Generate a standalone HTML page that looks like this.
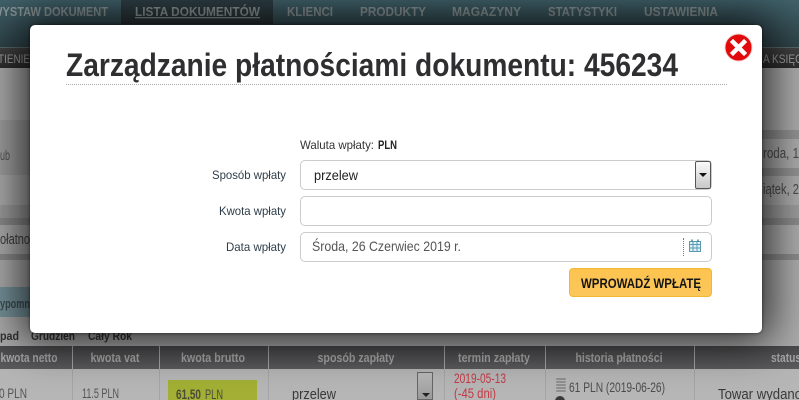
<!DOCTYPE html>
<html><head><meta charset="utf-8"><style>
html,body{margin:0;padding:0;background:#a8a8a8}
#p{position:relative;width:799px;height:400px;overflow:hidden;background:#adadad;font-family:"Liberation Sans",sans-serif}
.a{position:absolute}
svg{position:absolute;left:0;top:0}
</style></head><body><div id="p">
<div class="a" style="left:0;top:0;width:799px;height:47px;background:linear-gradient(#41626b,#2f4449)"></div>
<div class="a" style="left:121px;top:0;width:152px;height:24px;background:linear-gradient(#2e4046,#2b3539)"></div>
<div class="a" style="left:0;top:47px;width:799px;height:1px;background:#5c6a6c"></div>
<div class="a" style="left:0;top:48px;width:799px;height:20px;background:linear-gradient(#434343,#2d2d2d)"></div>
<div class="a" style="left:0;top:68px;width:799px;height:278px;background:#acacac"></div>
<div class="a" style="left:0;top:120px;width:40px;height:55px;background:#9f9f9f"></div>
<div class="a" style="left:740px;top:130px;width:59px;height:9px;background:#939393"></div>
<div class="a" style="left:740px;top:168px;width:59px;height:8px;background:#939393"></div>
<div class="a" style="left:0;top:205px;width:799px;height:13px;background:#9d9d9d"></div>
<div class="a" style="left:0;top:218px;width:799px;height:7px;background:#8c8c8c"></div>
<div class="a" style="left:0;top:254px;width:799px;height:6px;background:#8c8c8c"></div>
<div class="a" style="left:0;top:287px;width:40px;height:30px;background:#76939b"></div>
<div class="a" style="left:0;top:346px;width:799px;height:54px;background:#b6b6b6"></div>
<div class="a" style="left:0;top:346px;width:799px;height:23px;background:linear-gradient(#4a4a4c,#5b5b5d)"></div>
<div class="a" style="left:72px;top:346px;width:1px;height:54px;background:#a5a5a5"></div>
<div class="a" style="left:159px;top:346px;width:1px;height:54px;background:#a5a5a5"></div>
<div class="a" style="left:268px;top:346px;width:1px;height:54px;background:#a5a5a5"></div>
<div class="a" style="left:444px;top:346px;width:1px;height:54px;background:#a5a5a5"></div>
<div class="a" style="left:545px;top:346px;width:1px;height:54px;background:#a5a5a5"></div>
<div class="a" style="left:694px;top:346px;width:1px;height:54px;background:#a5a5a5"></div>
<div class="a" style="left:168px;top:380px;width:89px;height:20px;background:#a3b035"></div>
<div class="a" style="left:417px;top:372px;width:16px;height:28px;box-sizing:border-box;border:1px solid #666;background:linear-gradient(#bbb,#999)"></div>
<div class="a" style="left:426px;top:393px;width:0;height:0;margin-left:-4px;border:4px solid transparent;border-top:4px solid #222"></div>
<div class="a" style="left:556px;top:378px;width:10px;height:2px;border-radius:2px;background:#8f8f8f;box-shadow:0 3px #8f8f8f,0 6px #8f8f8f,0 9px #8f8f8f,0 12px #8f8f8f"></div>
<div class="a" style="left:555px;top:396px;width:10px;height:10px;border-radius:50%;background:#3a3a3a"></div>

<svg width="799" height="400" font-family="Liberation Sans, sans-serif">
<g font-weight="bold" font-size="13" fill="#8d9799">
<text x="-8" y="16" textLength="116" lengthAdjust="spacingAndGlyphs" fill="#8d9799">WYSTAW DOKUMENT</text>
<text x="135" y="16" textLength="125" lengthAdjust="spacingAndGlyphs" fill="#8d9799" text-decoration="underline">LISTA DOKUMENTÓW</text>
<text x="287" y="16" textLength="46" lengthAdjust="spacingAndGlyphs">KLIENCI</text>
<text x="360" y="16" textLength="66" lengthAdjust="spacingAndGlyphs">PRODUKTY</text>
<text x="452" y="16" textLength="69" lengthAdjust="spacingAndGlyphs">MAGAZYNY</text>
<text x="548" y="16" textLength="69" lengthAdjust="spacingAndGlyphs">STATYSTYKI</text>
<text x="644" y="16" textLength="74" lengthAdjust="spacingAndGlyphs">USTAWIENIA</text>
</g>
<text x="-2" y="63" font-size="12" fill="#a5a5a5" textLength="32" lengthAdjust="spacingAndGlyphs">TIENIE</text>
<text x="763" y="63" font-size="12" fill="#a5a5a5" textLength="40" lengthAdjust="spacingAndGlyphs">A KSIĘG</text>
<text x="0" y="160" font-size="14" fill="#555" textLength="10" lengthAdjust="spacingAndGlyphs">ub</text>
<text x="0" y="244" font-size="15" fill="#3c3c3c" textLength="30" lengthAdjust="spacingAndGlyphs">ołatno</text>
<text x="0" y="308" font-size="13" font-weight="bold" fill="#3d4c50" textLength="30" lengthAdjust="spacingAndGlyphs">ypomn</text>
<text x="763" y="158" font-size="15" fill="#4c4c4c" textLength="36" lengthAdjust="spacingAndGlyphs">roda, 1</text>
<text x="763" y="194" font-size="15" fill="#4c4c4c" textLength="36" lengthAdjust="spacingAndGlyphs">iątek, 2</text>
<g font-size="12" font-weight="bold" fill="#333">
<text x="0" y="340" textLength="19" lengthAdjust="spacingAndGlyphs">pad</text>
<text x="31" y="340" textLength="44" lengthAdjust="spacingAndGlyphs">Grudzień</text>
<text x="88" y="340" textLength="44" lengthAdjust="spacingAndGlyphs">Cały Rok</text>
</g>
<g font-size="13" font-weight="bold" fill="#a8a8a8" text-anchor="middle">
<text x="29" y="362" textLength="57" lengthAdjust="spacingAndGlyphs">kwota netto</text>
<text x="115" y="362" textLength="49" lengthAdjust="spacingAndGlyphs">kwota vat</text>
<text x="213" y="362" textLength="64" lengthAdjust="spacingAndGlyphs">kwota brutto</text>
<text x="356" y="362" textLength="77" lengthAdjust="spacingAndGlyphs">sposób zapłaty</text>
<text x="494" y="362" textLength="72" lengthAdjust="spacingAndGlyphs">termin zapłaty</text>
<text x="619" y="362" textLength="87" lengthAdjust="spacingAndGlyphs">historia płatności</text>
<text x="786" y="362" textLength="30" lengthAdjust="spacingAndGlyphs">status</text>
</g>
<g font-size="13.5" fill="#555">
<text x="-1" y="398" textLength="28" lengthAdjust="spacingAndGlyphs">0 PLN</text>
<text x="82" y="398" textLength="37" lengthAdjust="spacingAndGlyphs">11.5 PLN</text>
<text x="176" y="399" font-weight="bold" fill="#4c4c3a" textLength="25" lengthAdjust="spacingAndGlyphs">61,50</text>
<text x="205" y="399" fill="#4c4c3a" textLength="18" lengthAdjust="spacingAndGlyphs">PLN</text>
<text x="292" y="399" font-size="15" fill="#3a3a3a" textLength="44" lengthAdjust="spacingAndGlyphs">przelew</text>
<text x="454" y="383" fill="#c33a45" textLength="52" lengthAdjust="spacingAndGlyphs">2019-05-13</text>
<text x="454" y="398" fill="#c33a45" textLength="42" lengthAdjust="spacingAndGlyphs">(-45 dni)</text>
<text x="569" y="392" fill="#4c4c4c" textLength="96" lengthAdjust="spacingAndGlyphs">61 PLN (2019-06-26)</text>
<text x="718" y="399" font-size="15" fill="#3a3a3a" textLength="84" lengthAdjust="spacingAndGlyphs">Towar wydano</text>
</g>
</svg>

<div class="a" style="left:30px;top:25px;width:732px;height:308px;background:#fff;border-radius:5px;box-shadow:0 0 42px 10px rgba(0,0,0,.72),0 0 3px rgba(0,0,0,.6)"></div>
<div class="a" style="left:66px;top:84px;width:661px;border-top:1px dotted #aaa"></div>
<div class="a" style="left:300px;top:160px;width:412px;height:30px;box-sizing:border-box;border:1px solid #ccc;border-radius:5px;background:#fff"></div>
<div class="a" style="left:695px;top:161px;width:16px;height:28px;box-sizing:border-box;border:1px solid #555;border-radius:2px;background:linear-gradient(#fafafa,#c8c8c8)"></div>
<div class="a" style="left:699px;top:173px;width:0;height:0;border:4px solid transparent;border-top:4px solid #111"></div>
<div class="a" style="left:300px;top:196px;width:412px;height:30px;box-sizing:border-box;border:1px solid #ccc;border-radius:5px;background:#fff"></div>
<div class="a" style="left:300px;top:232px;width:412px;height:30px;box-sizing:border-box;border:1px solid #ccc;border-radius:5px;background:#fff"></div>
<div class="a" style="left:683px;top:238px;height:18px;border-left:1px dotted #777"></div>
<div class="a" style="left:569px;top:268px;width:143px;height:29px;box-sizing:border-box;border:1px solid #f4b733;border-radius:4px;background:linear-gradient(#fdc34f,#fcc75a)"></div>

<svg width="799" height="400" font-family="Liberation Sans, sans-serif">
<text x="66" y="76" font-size="32" font-weight="bold" fill="#2f2f31" textLength="612" lengthAdjust="spacingAndGlyphs">Zarządzanie płatnościami dokumentu: 456234</text>
<text x="300" y="149" font-size="12" fill="#333" textLength="74" lengthAdjust="spacingAndGlyphs">Waluta wpłaty:</text>
<text x="378" y="149" font-size="12" font-weight="bold" fill="#222" textLength="19" lengthAdjust="spacingAndGlyphs">PLN</text>
<g font-size="12" fill="#2f3d48" text-anchor="end">
<text x="286" y="179" textLength="74" lengthAdjust="spacingAndGlyphs">Sposób wpłaty</text>
<text x="286" y="215" textLength="67" lengthAdjust="spacingAndGlyphs">Kwota wpłaty</text>
<text x="286" y="251" textLength="60" lengthAdjust="spacingAndGlyphs">Data wpłaty</text>
</g>
<text x="314" y="180" font-size="14" fill="#222" textLength="44" lengthAdjust="spacingAndGlyphs">przelew</text>
<text x="312" y="251" font-size="14" fill="#555" textLength="149" lengthAdjust="spacingAndGlyphs">Środa, 26 Czerwiec 2019 r.</text>
<text x="581" y="288" font-size="14" font-weight="bold" fill="#151515" textLength="120" lengthAdjust="spacingAndGlyphs">WPROWADŹ WPŁATĘ</text>
<g>
<rect x="689.5" y="241.5" width="11" height="10" fill="#dff0f6" stroke="#5a9bb3"/>
<path d="M689 244.5H701M693 242V251M697 242V251M689.5 248H701" stroke="#5a9bb3" fill="none" stroke-width="1"/>
<path d="M692 239.5V242M698 239.5V242" stroke="#4a8ba3" stroke-width="1.5"/>
</g>
<circle cx="738.5" cy="47.5" r="13.5" fill="#e20a0a" stroke="#f0d0d0" stroke-width="1"/>
<path d="M733 42L744 53M744 42L733 53" stroke="#fff" stroke-width="4.5" stroke-linecap="square"/>
</svg>
</div></body></html>
